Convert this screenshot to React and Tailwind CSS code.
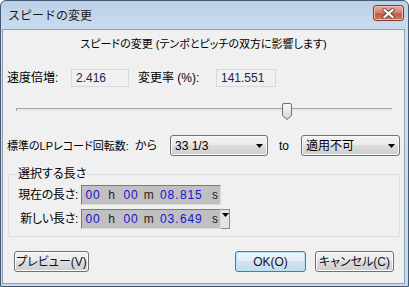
import React from "react";

// window chrome + dialog body, Win7 basic look
const ui = "font-['Liberation_Sans','Noto_Sans_CJK_JP',sans-serif] [font-feature-settings:'palt']";
const btnBg = "bg-[linear-gradient(#f2f2f2_0%,#ebebeb_50%,#dddddd_50%,#cfcfcf_100%)]";

function Arrow() {
  return (
    <svg width="7" height="4" viewBox="0 0 7 4">
      <path d="M0 0h7L3.5 4z" fill="#000" />
    </svg>
  );
}

function Combo({ value, className }) {
  return (
    <div
      className={`flex h-[21px] items-center justify-between rounded-[3px] border border-[#707070] pl-[4px] pr-[4px] shadow-[inset_0_0_0_1px_#f8f8f8] ${btnBg} ${className}`}
    >
      <span>{value}</span>
      <Arrow />
    </div>
  );
}

function Button({ children, primary, className }) {
  return (
    <div
      className={`flex h-[21px] items-center justify-center whitespace-nowrap rounded-[3px] border text-[#10102a] ${
        primary
          ? "border-[#3c7fb1] bg-[linear-gradient(#edf5fb_0%,#e2edf6_50%,#d3e3ef_50%,#c6dbea_100%)] shadow-[inset_0_0_0_1px_#b9e0f7]"
          : `border-[#707070] shadow-[inset_0_0_0_1px_#fbfbfb] ${btnBg}`
      } ${className}`}
    >
      {children}
    </div>
  );
}

function TimeBox({ sec, dropdown }) {
  const d = (c, i) => (
    <span key={i} className={c === "." ? "w-[5px] text-center" : "w-[7.5px] text-center"}>
      {c}
    </span>
  );
  return (
    <div className="flex h-[20px]">
      <div className="flex w-[140px] items-center border border-[#7c7c7c] border-r-[#dcdcdc] border-b-[#dcdcdc] bg-[#c0c0c0] pl-[3px] font-['Liberation_Sans',sans-serif] text-[12px] text-[#1414d2]">
        {["0", "0"].map(d)}
        <span className="w-[23px] text-center text-[#222]">h</span>
        {["0", "0"].map(d)}
        <span className="w-[21.5px] text-center text-[#222]">m</span>
        {sec.split("").map(d)}
        <span className="ml-auto pr-[2px] text-[#222]">s</span>
      </div>
      {dropdown && (
        <div className="flex w-[9px] justify-center border border-l-0 border-[#8a8a8a] bg-[#e4e4e4] pt-[3px]">
          <Arrow />
        </div>
      )}
    </div>
  );
}

export default function App() {
  return (
    <div
      className={`flex h-[287px] w-[409px] flex-col overflow-hidden rounded-t-[6px] border border-[#47596e] bg-[linear-gradient(#bcd1e9,#cfdff0_40px,#c6d8ec)] text-[12px] leading-[16px] text-black ${ui}`}
    >
      {/* title bar */}
      <div className="flex h-[28px] shrink-0 justify-between pl-[7px] pr-[4px]">
        <span className="self-center pt-[1px] text-[12px] text-[#1a1a1a] [font-feature-settings:normal]">
          スピードの変更
        </span>
        <div className="mt-[4px] flex h-[16px] w-[31px] items-center justify-center rounded-[3px] border border-[#83392a] bg-[linear-gradient(#e9a99a_0%,#d98672_45%,#c95a3d_55%,#d0765a_100%)] shadow-[inset_0_0_0_1px_#f0c0b0]">
          <svg width="13" height="11" viewBox="0 0 13 11">
            <path d="M2.5 2l8 7M10.5 2l-8 7" stroke="#6b4a44" strokeWidth="4" strokeLinecap="square" />
            <path d="M2.5 2l8 7M10.5 2l-8 7" stroke="#fff" strokeWidth="2.2" strokeLinecap="square" />
          </svg>
        </div>
      </div>

      {/* client */}
      <div className="mb-[2px] ml-[1px] mr-[3px] flex flex-1 flex-col whitespace-nowrap border border-[#8da2b8] bg-[#f0f0f0] px-[4px]">
        <div className="mt-[6px] text-center text-[11px]">スピードの変更 (テンポとピッチの双方に影響します)</div>

        <div className="mt-[17px] flex h-[18px] items-center">
          <span className="w-[64px]">速度倍増:</span>
          <div className="flex h-[18px] w-[58px] items-center border border-[#d5d9df] pl-[4px] text-[#24244e]">2.416</div>
          <span className="ml-[9px] w-[78px]">変更率 (%):</span>
          <div className="flex h-[18px] w-[60px] items-center border border-[#d5d9df] pl-[4px] text-[#24244e]">141.551</div>
        </div>

        {/* slider */}
        <div className="relative ml-[9px] mt-[16px] h-[17px] w-[376px]">
          <div className="mt-[5px] h-[3px] border-l border-t border-[#a3a3a3] border-b-white border-r-white bg-[#e7eaea]" />
          <svg className="absolute left-[266px] top-0" width="10" height="17" viewBox="0 0 10 17">
            <defs>
              <linearGradient id="th" x1="0" y1="0" x2="0" y2="1">
                <stop offset="0" stopColor="#fafafa" />
                <stop offset="1" stopColor="#d4d4d4" />
              </linearGradient>
            </defs>
            <path d="M0.5 2Q0.5 0.5 2 0.5H8Q9.5 0.5 9.5 2V12.5L5 16.5L0.5 12.5Z" fill="url(#th)" stroke="#6f6f6f" />
          </svg>
        </div>

        <div className="mt-[15px] flex h-[21px] items-center">
          <span className="w-[128px] text-[11px]">標準のLPレコード回転数:</span>
          <span className="w-[35px]">から</span>
          <Combo value="33 1/3" className="w-[98px]" />
          <span className="ml-[11px] w-[22px]">to</span>
          <Combo value="適用不可" className="w-[99px]" />
        </div>

        <fieldset className="ml-[1px] mt-[10px] w-[392px] rounded-[3px] border border-[#d5dfe5] pb-[7px] pl-[8px]">
          <legend className="px-[1px]">選択する長さ</legend>
          <div className="mt-[3px] flex items-center">
            <span className="w-[64px] pr-[3px] text-right tracking-[-0.3px]">現在の長さ:</span>
            <TimeBox sec="08.815" />
          </div>
          <div className="mt-[4px] flex items-center">
            <span className="w-[64px] pr-[3px] text-right tracking-[-0.3px]">新しい長さ:</span>
            <TimeBox sec="03.649" dropdown />
          </div>
        </fieldset>

        <div className="mt-[14px] flex items-center">
          <Button className="ml-[7px] w-[75px]">プレビュー(V)</Button>
          <Button primary className="ml-auto w-[71px]">OK(O)</Button>
          <Button className="ml-[9px] mr-[6px] w-[79px]">キャンセル(C)</Button>
        </div>
      </div>
    </div>
  );
}
